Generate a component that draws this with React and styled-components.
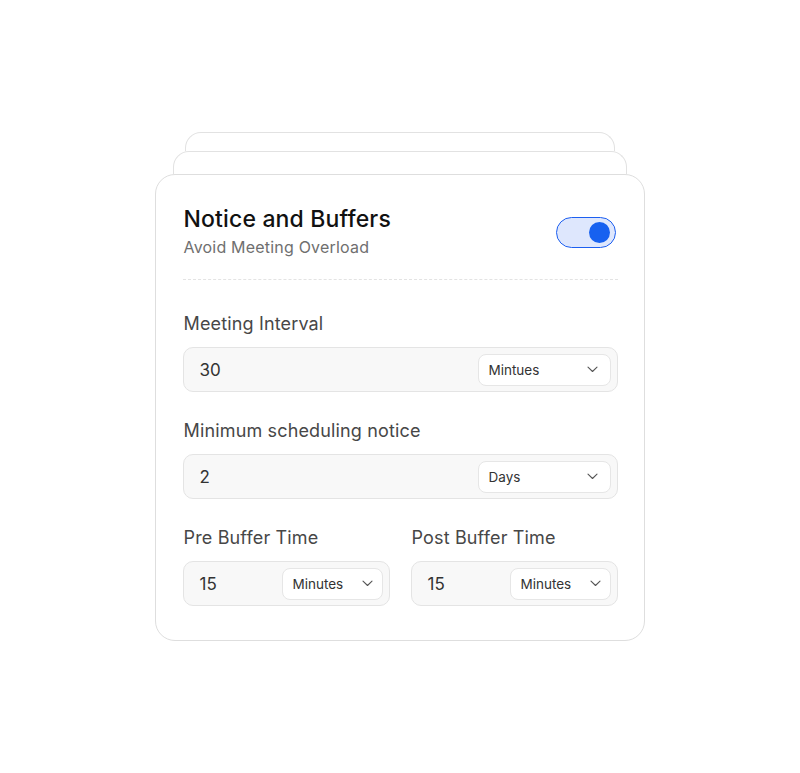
import React from "react";
import styled, { createGlobalStyle } from "styled-components";

const Global = createGlobalStyle`
  html, body { margin: 0; padding: 0; background: #ffffff; }
  body { font-family: Inter, "Noto Sans", "Liberation Sans", sans-serif; -webkit-font-smoothing: antialiased; }
  * { box-sizing: border-box; }
`;

const Page = styled.div`
  width: 800px;
  height: 773px;
  display: flex;
  align-items: center;
  justify-content: center;
`;

const Stack = styled.div`
  display: flex;
  flex-direction: column;
  align-items: center;
`;

const BackSheet = styled.div`
  width: ${(p) => p.$w}px;
  height: ${(p) => p.$h}px;
  border: 1.5px solid #e2e2e2;
  border-bottom: none;
  border-radius: 16px 16px 0 0;
  background: #fff;
`;

const Card = styled.div`
  width: 490px;
  border: 1.5px solid #dedede;
  border-radius: 20px;
  background: #fff;
  padding: 30px 26.5px 34px;
  display: flex;
  flex-direction: column;
`;

const Header = styled.div`
  display: flex;
  align-items: center;
  justify-content: space-between;
  padding: 0 2px 19px 1px;
  border-bottom: 1px dashed #e3e3e3;
`;

const HeadText = styled.div`
  display: flex;
  flex-direction: column;
`;

const Title = styled.div`
  font-size: 23px;
  line-height: 28px;
  font-weight: 500;
  color: #111;
  letter-spacing: 0.15px;
`;

const Subtitle = styled.div`
  margin-top: 1px;
  font-size: 16px;
  line-height: 26px;
  color: #6f6f6f;
  letter-spacing: 0.2px;
`;

const Toggle = styled.div`
  width: 60px;
  height: 31px;
  border-radius: 16px;
  border: 1.5px solid #1d5ff0;
  background: #dee7fd;
  display: flex;
  align-items: center;
  justify-content: flex-end;
  padding-right: 5px;
`;

const Knob = styled.div`
  width: 21px;
  height: 21px;
  border-radius: 50%;
  background: #1761f0;
`;

const Fields = styled.div`
  display: flex;
  flex-direction: column;
  gap: 27px;
  padding-top: 32px;
`;

const Row = styled.div`
  display: grid;
  grid-template-columns: 1fr 1fr;
  gap: 21px;
`;

const Field = styled.div`
  display: flex;
  flex-direction: column;
  gap: 11px;
`;

const Label = styled.div`
  font-size: 18px;
  line-height: 24px;
  color: #474747;
  letter-spacing: 0.15px;
  padding-left: 1px;
`;

const InputBox = styled.div`
  height: 45px;
  border: 1.5px solid #e4e4e4;
  border-radius: 10px;
  background: #f8f8f8;
  display: flex;
  align-items: center;
  justify-content: space-between;
  padding: 0 5.5px 0 16px;
`;

const Value = styled.div`
  font-size: 17px;
  color: #333;
`;

const Select = styled.div`
  width: ${(p) => p.$w}px;
  height: 32px;
  border: 1.5px solid #e6e6e6;
  border-radius: 8px;
  background: #fff;
  display: flex;
  align-items: center;
  justify-content: space-between;
  padding: 0 ${(p) => p.$pr}px 0 9.5px;
  font-size: 13.5px;
  color: #333;
`;

const Chevron = () => (
  <svg width="11" height="7" viewBox="0 0 11 7" fill="none">
    <path d="M1 1.2 5.5 5.5 10 1.2" stroke="#555" strokeWidth="1.1" strokeLinecap="round" strokeLinejoin="round" />
  </svg>
);

function UnitInput({ value, unit, w, pr }) {
  return (
    <InputBox>
      <Value>{value}</Value>
      <Select $w={w} $pr={pr}>
        <span>{unit}</span>
        <Chevron />
      </Select>
    </InputBox>
  );
}

export default function App() {
  return (
    <Page>
      <Global />
      <Stack>
        <BackSheet $w={430} $h={19} />
        <BackSheet $w={454} $h={23} />
        <Card>
          <Header>
            <HeadText>
              <Title>Notice and Buffers</Title>
              <Subtitle>Avoid Meeting Overload</Subtitle>
            </HeadText>
            <Toggle>
              <Knob />
            </Toggle>
          </Header>
          <Fields>
            <Field>
              <Label>Meeting Interval</Label>
              <UnitInput value="30" unit="Mintues" w={133} pr={12} />
            </Field>
            <Field>
              <Label>Minimum scheduling notice</Label>
              <UnitInput value="2" unit="Days" w={133} pr={12} />
            </Field>
            <Row>
              <Field>
                <Label>Pre Buffer Time</Label>
                <UnitInput value="15" unit="Minutes" w={101} pr={9} />
              </Field>
              <Field>
                <Label>Post Buffer Time</Label>
                <UnitInput value="15" unit="Minutes" w={101} pr={9} />
              </Field>
            </Row>
          </Fields>
        </Card>
      </Stack>
    </Page>
  );
}
